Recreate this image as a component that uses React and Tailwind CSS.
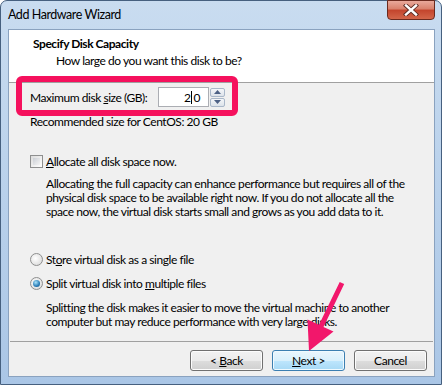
import React from 'react';

const font = { fontFamily: 'Lato, "Noto Sans", sans-serif' };

function Btn({ children, primary }) {
  return (
    <div
      className={
        'w-[73px] h-[21px] rounded-[3px] border flex items-center justify-center text-[12px] text-black ' +
        (primary
          ? 'border-[#3c7fb1] bg-[linear-gradient(#eaf6fd_0%,#d9f0fc_50%,#bee6fd_51%,#a7d9f5_100%)] shadow-[inset_0_0_0_1px_#f0faff]'
          : 'border-[#707070] bg-[linear-gradient(#f2f2f2_0%,#ebebeb_50%,#dddddd_51%,#cfcfcf_100%)] shadow-[inset_0_0_0_1px_#fcfcfc]')
      }
    >
      <span className="whitespace-pre">{children}</span>
    </div>
  );
}

function Radio({ checked }) {
  return (
    <div className="w-[13px] h-[13px] shrink-0 rounded-full border border-[#8e8f8f] bg-[radial-gradient(circle_at_40%_40%,#ffffff,#d4d4d4)] flex items-center justify-center">
      {checked && (
        <div className="w-[7px] h-[7px] rounded-full bg-[radial-gradient(circle_at_40%_35%,#a9e3fb,#2a7cb6_60%,#0d4f86)]" />
      )}
    </div>
  );
}

export default function App() {
  return (
    <div className="w-[442px] h-[385px] overflow-hidden bg-white tracking-[-0.45px]" style={font}>
      <div className="relative w-[442px] h-[385px] rounded-t-[7px] border border-[#46607f] bg-[linear-gradient(#c9dcf0_0%,#bcd3ec_40%,#aac6e6_100%)] flex flex-col">
        {/* title bar */}
        <div className="h-[28px] shrink-0 flex items-center pl-[7px] text-[12.5px] text-black">
          Add Hardware Wizard
        </div>
        <div className="absolute top-[-1px] right-[6px] w-[48px] h-[20px] rounded-b-[4px] border border-[#6b2a1e] bg-[linear-gradient(#e9a99b_0%,#d8806b_45%,#c3442c_50%,#d3664a_100%)] flex items-center justify-center">
          <svg width="16" height="12" viewBox="0 0 16 12">
            <path d="M3 1.5 L13 10.5 M13 1.5 L3 10.5" stroke="#5a2a22" strokeWidth="4.2" strokeLinecap="square" />
            <path d="M3 1.5 L13 10.5 M13 1.5 L3 10.5" stroke="#ffffff" strokeWidth="2.4" strokeLinecap="square" />
          </svg>
        </div>

        {/* client area */}
        <div className="ml-[7px] mr-[6px] h-[348px] shrink-0 border border-[#8aa2bf] bg-[#f0f0f0] flex flex-col text-[12px] text-black">
          <div className="h-[53px] shrink-0 bg-white border-b border-[#a0a0a0] pt-[6px]">
            <div className="pl-[24px] font-bold leading-[16px]">Specify Disk Capacity</div>
            <div className="pl-[47px] mt-[1px] leading-[16px]">How large do you want this disk to be?</div>
          </div>

          <div className="pl-[21px] flex flex-col shrink-0">
            <div className="mt-[4px] h-[20px] flex items-center">
              <span className="w-[128px] shrink-0 leading-[15px]">
                Maximum disk <span className="underline">s</span>ize (GB):
              </span>
              <div className="w-[51px] h-[20px] border border-[#abadb3] bg-white flex items-center justify-end pr-[8px] leading-[15px]">
                2<span className="inline-block w-px h-[13px] bg-black mx-px" />0
              </div>
              <div className="ml-[1px] w-[15px] h-[19px] flex flex-col gap-px">
                <div className="h-[9px] rounded-[2px] border border-[#a9b7c9] bg-[linear-gradient(#f4f6f9,#dde3ea)] flex items-center justify-center">
                  <svg width="7" height="4" viewBox="0 0 7 4"><path d="M0 4 L3.5 0 L7 4 Z" fill="#4d6185" /></svg>
                </div>
                <div className="h-[9px] rounded-[2px] border border-[#a9b7c9] bg-[linear-gradient(#f4f6f9,#dde3ea)] flex items-center justify-center">
                  <svg width="7" height="4" viewBox="0 0 7 4"><path d="M0 0 L7 0 L3.5 4 Z" fill="#4d6185" /></svg>
                </div>
              </div>
            </div>

            <div className="mt-[7px] leading-[15px]">Recommended size for CentOS: 20 GB</div>

            <div className="mt-[25px] flex items-center gap-[3px] leading-[15px]">
              <div className="w-[13px] h-[13px] shrink-0 border border-[#8e8f8f] bg-[linear-gradient(135deg,#dcdcdc,#ffffff)] p-[2px]">
                <div className="w-full h-full bg-[linear-gradient(135deg,#cbcfd5,#f4f4f4)]" />
              </div>
              <span>
                <span className="underline">A</span>llocate all disk space now.
              </span>
            </div>

            <div className="mt-[8px] pl-[16px] leading-[14px] whitespace-nowrap">
              <div>Allocating the full capacity can enhance performance but requires all of the</div>
              <div>physical disk space to be available right now. If you do not allocate all the</div>
              <div>space now, the virtual disk starts small and grows as you add data to it.</div>
            </div>

            <div className="mt-[33px] flex items-center gap-[3px] leading-[15px]">
              <Radio />
              <span>
                St<span className="underline">o</span>re virtual disk as a single file
              </span>
            </div>

            <div className="mt-[9px] flex items-center gap-[3px] leading-[15px]">
              <Radio checked />
              <span>
                Split virtual disk into <span className="underline">m</span>ultiple files
              </span>
            </div>

            <div className="mt-[10px] pl-[16px] leading-[14px] whitespace-nowrap">
              <div>Splitting the disk makes it easier to move the virtual machine to another</div>
              <div>computer but may reduce performance with very large disks.</div>
            </div>
          </div>

          <div className="mt-auto shrink-0 mx-[1px] border-t border-[#a0a0a0] h-[35px] pt-[8px] flex justify-end gap-[9px] pr-[6px]">
            <Btn>
              {'< '}<span className="underline">B</span>ack
            </Btn>
            <Btn primary>
              <span className="underline">N</span>{'ext >'}
            </Btn>
            <Btn>Cancel</Btn>
          </div>
        </div>

        {/* annotation: highlight box */}
        <div className="absolute left-[15px] top-[75px] w-[222px] h-[40px] rounded-[6px] border-[6px] border-[#f5115d]" />

        {/* annotation: arrow */}
        <svg className="absolute left-0 top-0 pointer-events-none" width="442" height="385" viewBox="0 0 442 385">
          <path
            d="M343.2 283.1 L338.7 280.9 L318 323.7 L306.5 318.5 L308 350 L332.5 330.5 L322.5 325.9 Z"
            fill="#f2176b"
          />
        </svg>
      </div>
    </div>
  );
}
